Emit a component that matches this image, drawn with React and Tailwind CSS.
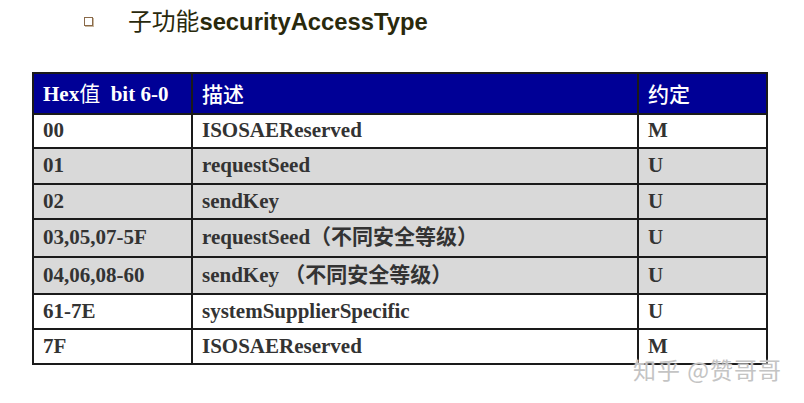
import React from "react";

const rows = [
  { hex: "00", desc: "ISOSAEReserved", conv: "M", gray: false, h: "h-[34px]" },
  { hex: "01", desc: "requestSeed", conv: "U", gray: true, h: "h-[36px]" },
  { hex: "02", desc: "sendKey", conv: "U", gray: true, h: "h-[35px]" },
  { hex: "03,05,07-5F", desc: "requestSeed（不同安全等级）", conv: "U", gray: true, h: "h-[38px]" },
  { hex: "04,06,08-60", desc: "sendKey （不同安全等级）", conv: "U", gray: true, h: "h-[37px]" },
  { hex: "61-7E", desc: "systemSupplierSpecific", conv: "U", gray: false, h: "h-[35px]" },
  { hex: "7F", desc: "ISOSAEReserved", conv: "M", gray: false, h: "h-[35px]" },
];

const serif = "font-['Liberation_Serif','Noto_Sans_CJK_SC',serif]";

export default function App() {
  return (
    <div className="relative w-[804px] h-[403px] bg-white overflow-hidden">
      <div className="flex items-center h-[40px] pl-[84px] pt-[1px]">
        <div className="w-[9px] h-[9px] border border-[#8a6a4a] shadow-[1px_1px_0_#c9b8a0] mt-[1px]" />
        <div className="ml-[35px] text-[23.8px] leading-none text-[#29290c] flex items-baseline">
          <span className="font-['Noto_Sans_CJK_SC',serif] font-normal">子功能</span>
          <span className="font-['Liberation_Sans',sans-serif] font-bold">securityAccessType</span>
        </div>
      </div>
      <div className="pl-[32px] pt-[32px]">
        <table className={`table-fixed border-collapse w-[734px] text-[21px] ${serif}`}>
          <colgroup>
            <col className="w-[159px]" />
            <col className="w-[446px]" />
            <col className="w-[129px]" />
          </colgroup>
          <thead>
            <tr className="h-[41px] bg-[#000096] text-white">
              <th className="border-2 border-[#1a1a1a] text-left pl-[9px] font-bold whitespace-pre">
                Hex<span className="font-['Noto_Sans_CJK_SC',serif] font-normal">值</span>{"  bit 6-0"}
              </th>
              <th className="border-2 border-[#1a1a1a] text-left pl-[9px] font-['Noto_Sans_CJK_SC',serif] font-medium">描述</th>
              <th className="border-2 border-[#1a1a1a] text-left pl-[9px] font-['Noto_Sans_CJK_SC',serif] font-medium">约定</th>
            </tr>
          </thead>
          <tbody>
            {rows.map((r, i) => (
              <tr key={i} className={`${r.h} ${r.gray ? "bg-[#d9d9d9]" : "bg-white"} text-[#333333] font-bold`}>
                <td className="border-2 border-[#1a1a1a] pl-[9px] whitespace-nowrap">{r.hex}</td>
                <td className="border-2 border-[#1a1a1a] pl-[9px] whitespace-pre">{r.desc}</td>
                <td className="border-2 border-[#1a1a1a] pl-[9px]">{r.conv}</td>
              </tr>
            ))}
          </tbody>
        </table>
      </div>
      <div className="absolute left-[633px] top-[358px] text-[23px] leading-none text-[#c4c4c4] font-['Noto_Sans_CJK_SC',sans-serif] whitespace-pre tracking-[1px] [text-shadow:0_0_2px_#fff]">
        知乎 @赞哥哥
      </div>
    </div>
  );
}
